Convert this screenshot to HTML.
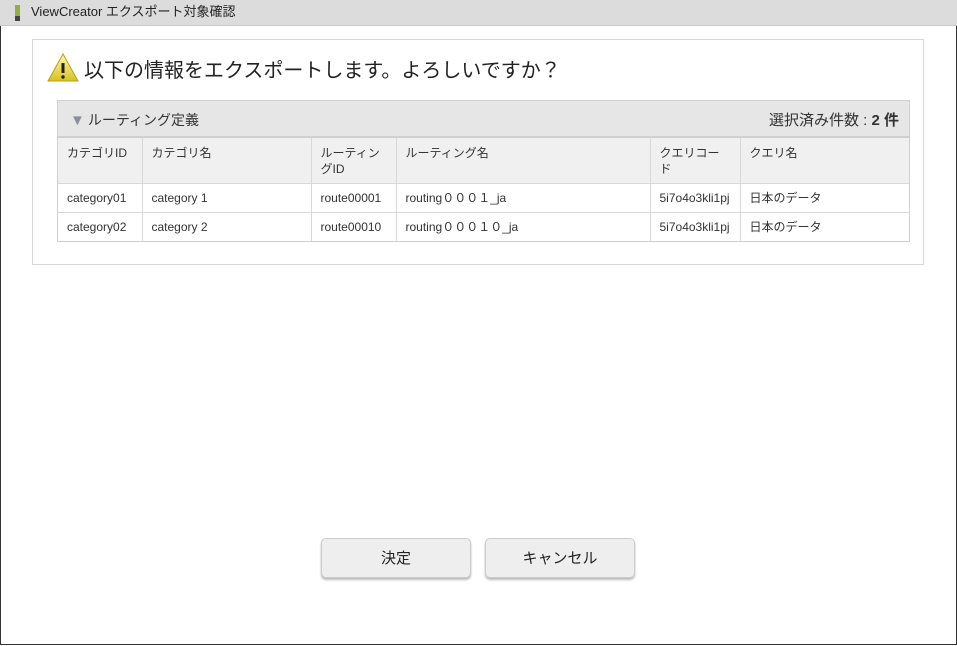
<!DOCTYPE html><html><head><meta charset="utf-8"><style>
body{margin:0;width:957px;height:646px;overflow:hidden;font-family:"Liberation Sans","Noto Sans CJK JP",sans-serif;background:#fff}
.frame{position:absolute;left:0;top:0;width:955px;height:644px;border:1px solid #333;border-top:none}
.tb{position:absolute;left:0;top:0;width:957px;height:25px;background:#dcdcdc;border-bottom:1px solid #c8c8c8;font-size:13px;color:#222;line-height:25px}
.tb .ic{position:absolute;left:15px;top:5px;width:5px;height:16px;background:#8fb23c}
.tb .ic:after{content:"";position:absolute;left:0;top:11px;width:5px;height:5px;background:#444}
.tb span{position:absolute;left:31px;top:-1px}
.panel{position:absolute;left:32px;top:39px;width:890px;height:224px;border:1px solid #d8d8d8}
.h{position:absolute;font-size:20px;color:#222}
.warn{position:absolute;left:47px;top:53px}
.tbl{position:absolute;left:57px;top:100px;width:851px;border:1px solid #d0d0d0}
.bar{height:35px;background:#e6e6e6;border-bottom:2px solid #d0d0d0;position:relative;font-size:14px;color:#333}
.bar .l{position:absolute;left:12px;top:9px}
.bar .l b{color:#8a8f99;font-weight:normal;font-size:15px;margin-right:3px}
.bar .r{position:absolute;right:10px;top:8px;font-size:15px}
table{border-collapse:collapse;width:851px;font-size:12px;color:#333;table-layout:fixed}
td{border-right:1px solid #d8d8d8;border-bottom:1px solid #d8d8d8;padding:0 9px;vertical-align:middle}
td:last-child{border-right:none}
tr:last-child td{border-bottom:none}
tr.hd td{background:#f0f0f0;height:45px;vertical-align:top;padding-top:7px;line-height:16px;box-sizing:border-box}
tr.d td{height:28px}
.btn{position:absolute;top:538px;width:150px;height:40px;border:1px solid #ccc;border-radius:5px;background:#eee;box-shadow:0 2px 2px #bbb;font-size:15px;color:#222;text-align:center;line-height:39px;box-sizing:border-box}
</style></head><body>
<div class="frame"></div>
<div class="tb"><div class="ic"></div><span>ViewCreator エクスポート対象確認</span></div>
<div class="panel"></div>
<svg class="warn" width="32" height="30" viewBox="0 0 32 30"><defs><linearGradient id="g" x1="0" y1="0" x2="0" y2="1"><stop offset="0" stop-color="#fff9b0"/><stop offset="1" stop-color="#d9c21a"/></linearGradient></defs><path d="M16 1 L31 28 L1 28 Z" fill="url(#g)" stroke="#b8a020" stroke-width="1"/><rect x="14.5" y="10" width="3" height="10" fill="#222"/><circle cx="16" cy="24" r="1.7" fill="#222"/></svg>
<div class="h" style="left:84px;top:54px">以下の情報をエクスポートします。よろしいですか？</div>
<div class="tbl">
<div class="bar"><div class="l"><b>▼</b>ルーティング定義</div><div class="r">選択済み件数 : <b>2 件</b></div></div>
<table>
<colgroup><col style="width:84px"><col style="width:169px"><col style="width:85px"><col style="width:254px"><col style="width:90px"><col></colgroup>
<tr class="hd"><td>カテゴリID</td><td>カテゴリ名</td><td>ルーティングID</td><td>ルーティング名</td><td>クエリコード</td><td>クエリ名</td></tr>
<tr class="d"><td>category01</td><td>category 1</td><td>route00001</td><td>routing０００１_ja</td><td>5i7o4o3kli1pj</td><td>日本のデータ</td></tr>
<tr class="d"><td>category02</td><td>category 2</td><td>route00010</td><td>routing０００１０_ja</td><td>5i7o4o3kli1pj</td><td>日本のデータ</td></tr>
</table></div>
<div class="btn" style="left:321px">決定</div>
<div class="btn" style="left:485px">キャンセル</div>
</body></html>
